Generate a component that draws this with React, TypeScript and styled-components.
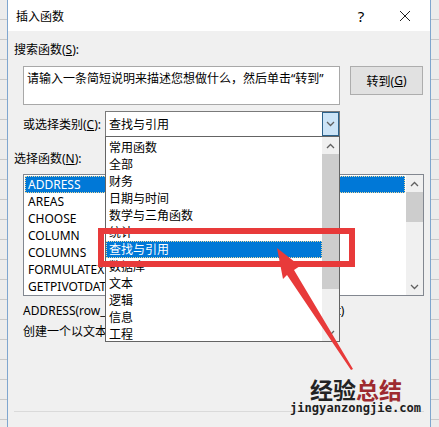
import React from 'react';
import styled, { createGlobalStyle } from 'styled-components';

const GlobalStyle = createGlobalStyle`
    html, body {
        margin: 0;
        padding: 0;
    }
    body {
        width: 439px;
        height: 427px;
        overflow: hidden;
        font-family: "Noto Sans", "Noto Sans CJK SC", sans-serif;
        font-size: 12px;
        color: #000;
    }
`;

const categories = ['常用函数', '全部', '财务', '日期与时间', '数学与三角函数', '统计', '查找与引用', '数据库', '文本', '逻辑', '信息', '工程'];
const functions = ['ADDRESS', 'AREAS', 'CHOOSE', 'COLUMN', 'COLUMNS', 'FORMULATEXT', 'GETPIVOTDATA'];

const Desktop = styled.div`
    position: relative;
    width: 439px;
    height: 427px;
    overflow: hidden;
    display: flex;
    background-color: #ececec;
    background-image: repeating-linear-gradient(to bottom, transparent 0 19px, #c9c9c9 19px 20px);
`;

const Dialog = styled.div`
    margin-left: 7px;
    width: 424px;
    height: 440px;
    box-sizing: border-box;
    border-left: 1px solid #7fa6cf;
    border-right: 1px solid #7fa6cf;
    background: #f0f0f0;
    display: flex;
    flex-direction: column;
`;

const TitleBar = styled.div`
    height: 31px;
    flex: 0 0 auto;
    background: #fff;
    display: flex;
    align-items: center;
    padding-left: 8px;
`;

const Title = styled.div`
    flex: 1 1 auto;
    font-size: 12px;
`;

const HelpButton = styled.div`
    width: 30px;
    margin-right: 6px;
    text-align: center;
    font-size: 15px;
    font-family: "Noto Sans", sans-serif;
`;

const CloseButton = styled.div`
    width: 46px;
    margin-right: 2px;
    display: flex;
    justify-content: center;
    align-items: center;
`;

const Body = styled.div`
    flex: 1 1 auto;
    display: flex;
    flex-direction: column;
    padding: 10px 6px 0 6px;
`;

const Label = styled.div<{ $top: number; $indent?: boolean }>`
    margin-top: ${p => p.$top}px;
    margin-left: ${p => (p.$indent ? 9 : 0)}px;
    line-height: 17px;
    white-space: nowrap;
`;

const Key = styled.span`
    text-decoration: underline;
`;

const SearchRow = styled.div`
    display: flex;
    align-items: flex-start;
    gap: 10px;
    margin-top: 8px;
    margin-left: 9px;
`;

const SearchBox = styled.div`
    width: 317px;
    height: 39px;
    box-sizing: border-box;
    border: 1px solid #a8a8a8;
    background: #fff;
    padding: 3px 3px;
    line-height: 17px;
    white-space: nowrap;
`;

const GoButton = styled.div`
    width: 73px;
    height: 29px;
    box-sizing: border-box;
    border: 1px solid #adadad;
    background: #e1e1e1;
    display: flex;
    align-items: center;
    justify-content: center;
`;

const CategoryRow = styled.div`
    display: flex;
    align-items: center;
    margin-top: 6px;
    margin-left: 9px;
    height: 26px;
`;

const CategoryLabel = styled.div`
    width: 82px;
    white-space: nowrap;
`;

const Combo = styled.div`
    position: relative;
    width: 235px;
    height: 26px;
    box-sizing: border-box;
    border: 1px solid #7a7a7a;
    background: #fff;
    display: flex;
    align-items: center;
`;

const ComboText = styled.div`
    flex: 1 1 auto;
    padding-left: 3px;
`;

const ComboArrow = styled.div`
    width: 17px;
    height: 24px;
    box-sizing: border-box;
    border: 1px solid #2c628b;
    background: #cce4f7;
    display: flex;
    align-items: center;
    justify-content: center;
`;

const Dropdown = styled.div`
    position: absolute;
    top: 100%;
    left: -1px;
    width: 235px;
    height: 206px;
    box-sizing: border-box;
    border: 1px solid #646464;
    background: #fff;
    display: flex;
    z-index: 2;
`;

const DropItems = styled.div`
    flex: 1 1 auto;
    padding-top: 2px;
`;

const Item = styled.div<{ $selected?: boolean }>`
    height: 17px;
    line-height: 17px;
    padding-left: 3px;
    box-sizing: border-box;
    white-space: nowrap;
    background: ${p => (p.$selected ? '#0078d7' : 'transparent')};
    color: ${p => (p.$selected ? '#fff' : '#000')};
    outline: ${p => (p.$selected ? '1px dotted #e9d9a0' : 'none')};
    outline-offset: -1px;
`;

const Scrollbar = styled.div`
    width: 17px;
    flex: 0 0 17px;
    background: #f0f0f0;
    display: flex;
    flex-direction: column;
`;

const ScrollArrow = styled.div`
    height: 17px;
    flex: 0 0 17px;
    display: flex;
    align-items: center;
    justify-content: center;
`;

const Thumb = styled.div<{ $size: number }>`
    flex: 0 0 ${p => p.$size}px;
    background: #cdcdcd;
`;

const Track = styled.div`
    flex: 1 1 auto;
`;

const FunctionList = styled.div`
    margin-top: 7px;
    margin-left: 9px;
    width: 401px;
    height: 122px;
    box-sizing: border-box;
    border: 1px solid #828790;
    background: #fff;
    display: flex;
`;

const FunctionItems = styled.div`
    flex: 1 1 auto;
    padding: 1px;
`;

const Separator = styled.div`
    margin-top: 71px;
    height: 1px;
    background: #dadada;
`;

const Watermark = styled.div`
    position: absolute;
    left: 290px;
    top: 376px;
    z-index: 4;
    display: flex;
    flex-direction: column;
    align-items: flex-start;
`;

const WatermarkTitle = styled.div`
    margin-left: 20px;
    font-family: "Noto Sans CJK SC", sans-serif;
    font-weight: 700;
    font-size: 23px;
    line-height: 26px;
    color: #232323;
    white-space: nowrap;
`;

const Accent = styled.span`
    color: #9e2a2f;
`;

const WatermarkUrl = styled.div`
    font-family: "DejaVu Sans Mono", monospace;
    font-weight: 700;
    font-size: 12.1px;
    line-height: 13px;
    color: #1e1e1e;
    white-space: nowrap;
`;

const Annotation = styled.svg`
    position: absolute;
    left: 0;
    top: 0;
    z-index: 3;
    pointer-events: none;
`;

const Chevron = ({ up }: { up?: boolean }) => (
    <svg width="9" height="6" viewBox="0 0 9 6">
        <path d={up ? 'M1 5 L4.5 1.5 L8 5' : 'M1 1 L4.5 4.5 L8 1'} fill="none" stroke="#606060" strokeWidth="1.3" />
    </svg>
);

const App = () => {
    return (
        <Desktop>
            <GlobalStyle />
            <Dialog>
                <TitleBar>
                    <Title>插入函数</Title>
                    <HelpButton>?</HelpButton>
                    <CloseButton>
                        <svg width="12" height="12" viewBox="0 0 12 12">
                            <path d="M1 1 L11 11 M11 1 L1 11" stroke="#222" strokeWidth="1" />
                        </svg>
                    </CloseButton>
                </TitleBar>
                <Body>
                    <Label $top={0}>搜索函数(<Key>S</Key>):</Label>
                    <SearchRow>
                        <SearchBox>请输入一条简短说明来描述您想做什么，然后单击“转到”</SearchBox>
                        <GoButton>转到(<Key>G</Key>)</GoButton>
                    </SearchRow>
                    <CategoryRow>
                        <CategoryLabel>或选择类别(<Key>C</Key>):</CategoryLabel>
                        <Combo>
                            <ComboText>查找与引用</ComboText>
                            <ComboArrow>
                                <Chevron />
                            </ComboArrow>
                            <Dropdown>
                                <DropItems>
                                    {categories.map(c => (
                                        <Item key={c} $selected={c === '查找与引用'}>{c}</Item>
                                    ))}
                                </DropItems>
                                <Scrollbar>
                                    <ScrollArrow><Chevron up /></ScrollArrow>
                                    <Thumb $size={135} />
                                    <Track />
                                    <ScrollArrow><Chevron /></ScrollArrow>
                                </Scrollbar>
                            </Dropdown>
                        </Combo>
                    </CategoryRow>
                    <Label $top={13}>选择函数(<Key>N</Key>):</Label>
                    <FunctionList>
                        <FunctionItems>
                            {functions.map((f, index) => (
                                <Item key={f} $selected={index === 0}>{f}</Item>
                            ))}
                        </FunctionItems>
                        <Scrollbar>
                            <ScrollArrow><Chevron up /></ScrollArrow>
                            <Thumb $size={30} />
                            <Track />
                            <ScrollArrow><Chevron /></ScrollArrow>
                        </Scrollbar>
                    </FunctionList>
                    <Label $top={6} $indent>ADDRESS(row_num,column_num,abs_num,a1,sheet_text)</Label>
                    <Label $top={4} $indent>创建一个以文本方式对工作簿中某一单元格的引用。</Label>
                    <Separator />
                </Body>
            </Dialog>
            <Annotation width="439" height="427" viewBox="0 0 439 427">
                <rect x="101" y="231" width="251" height="33" fill="none" stroke="#e83a3a" strokeWidth="6" />
                <polygon points="277,248 300,266 294,270 353,369 351,370 287,275 283,279" fill="#e83a3a" />
            </Annotation>
            <Watermark>
                <WatermarkTitle>经验<Accent>总结</Accent></WatermarkTitle>
                <WatermarkUrl>jingyanzongjie.com</WatermarkUrl>
            </Watermark>
        </Desktop>
    );
};

export default App;
